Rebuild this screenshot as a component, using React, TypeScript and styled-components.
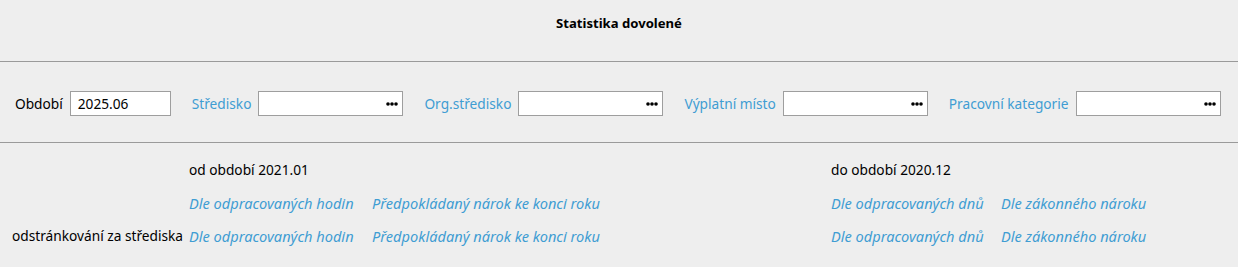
import * as React from "react";
import styled, { createGlobalStyle } from "styled-components";

const GlobalStyle = createGlobalStyle`
  html, body {
    margin: 0;
    padding: 0;
    background: #eeeeee;
  }
  body {
    font-family: "Noto Sans", "Open Sans", sans-serif;
    font-size: 13.7px;
    color: #000;
  }
`;

const blue = "#3f9dd3";

const Page = styled.div`
  width: 1238px;
  height: 267px;
  background: #eeeeee;
`;

const Header = styled.div`
  height: 62px;
  display: flex;
  justify-content: center;
  padding-top: 14px;
  box-sizing: border-box;
  border-bottom: 1px solid #9a9a9a;
`;

const Title = styled.h1`
  margin: 0;
  font-size: 13.1px;
  font-weight: 700;
`;

const FilterBar = styled.div`
  height: 81px;
  display: flex;
  align-items: center;
  padding: 3px 0 0 15px;
  box-sizing: border-box;
  gap: 21px;
  border-bottom: 1px solid #9a9a9a;
`;

const Field = styled.label`
  display: flex;
  align-items: center;
  gap: 7px;
`;

const FieldLabel = styled.span<{ $link?: boolean }>`
  color: ${(p) => (p.$link ? blue : "#000")};
`;

const InputBox = styled.div<{ $width: number }>`
  width: ${(p) => p.$width}px;
  height: 25px;
  box-sizing: border-box;
  background: #fff;
  border: 1px solid #9e9e9e;
  display: flex;
  align-items: center;
  justify-content: space-between;
  padding: 0 4px 0 7px;
`;

const Dots = () => (
  <svg width="12" height="4" viewBox="0 0 12 4">
    <circle cx="2" cy="2" r="1.8" fill="#000" />
    <circle cx="6" cy="2" r="1.8" fill="#000" />
    <circle cx="10" cy="2" r="1.8" fill="#000" />
  </svg>
);

const Grid = styled.div`
  display: grid;
  grid-template-columns: 189px 183px 459px 170px 1fr;
  grid-auto-rows: 33px;
  padding-top: 10px;
  align-items: center;
`;

const Cell = styled.div<{ $align?: "right" }>`
  white-space: nowrap;
  text-align: ${(p) => p.$align ?? "left"};
  padding-right: ${(p) => (p.$align ? "6px" : "0")};
`;

const LinkCell = styled.a`
  color: ${blue};
  font-style: italic;
  font-size: 14.6px;
  white-space: nowrap;
  cursor: pointer;
`;

const fields = [
  { label: "Středisko", width: 145 },
  { label: "Org.středisko", width: 145 },
  { label: "Výplatní místo", width: 145 },
  { label: "Pracovní kategorie", width: 145 },
];

export default function App() {
  return (
    <Page>
      <GlobalStyle />
      <Header>
        <Title>Statistika dovolené</Title>
      </Header>
      <FilterBar>
        <Field>
          <FieldLabel>Období</FieldLabel>
          <InputBox $width={101}>2025.06</InputBox>
        </Field>
        {fields.map((f) => (
          <Field key={f.label}>
            <FieldLabel $link>{f.label}</FieldLabel>
            <InputBox $width={f.width}>
              <span />
              <Dots />
            </InputBox>
          </Field>
        ))}
      </FilterBar>
      <Grid>
        <Cell />
        <Cell style={{ gridColumn: "2 / 4" }}>od období 2021.01</Cell>
        <Cell style={{ gridColumn: "4 / 6" }}>do období 2020.12</Cell>

        <Cell />
        <LinkCell>Dle odpracovaných hodin</LinkCell>
        <LinkCell>Předpokládaný nárok ke konci roku</LinkCell>
        <LinkCell>Dle odpracovaných dnů</LinkCell>
        <LinkCell>Dle zákonného nároku</LinkCell>

        <Cell $align="right">odstránkování za střediska</Cell>
        <LinkCell>Dle odpracovaných hodin</LinkCell>
        <LinkCell>Předpokládaný nárok ke konci roku</LinkCell>
        <LinkCell>Dle odpracovaných dnů</LinkCell>
        <LinkCell>Dle zákonného nároku</LinkCell>
      </Grid>
    </Page>
  );
}
